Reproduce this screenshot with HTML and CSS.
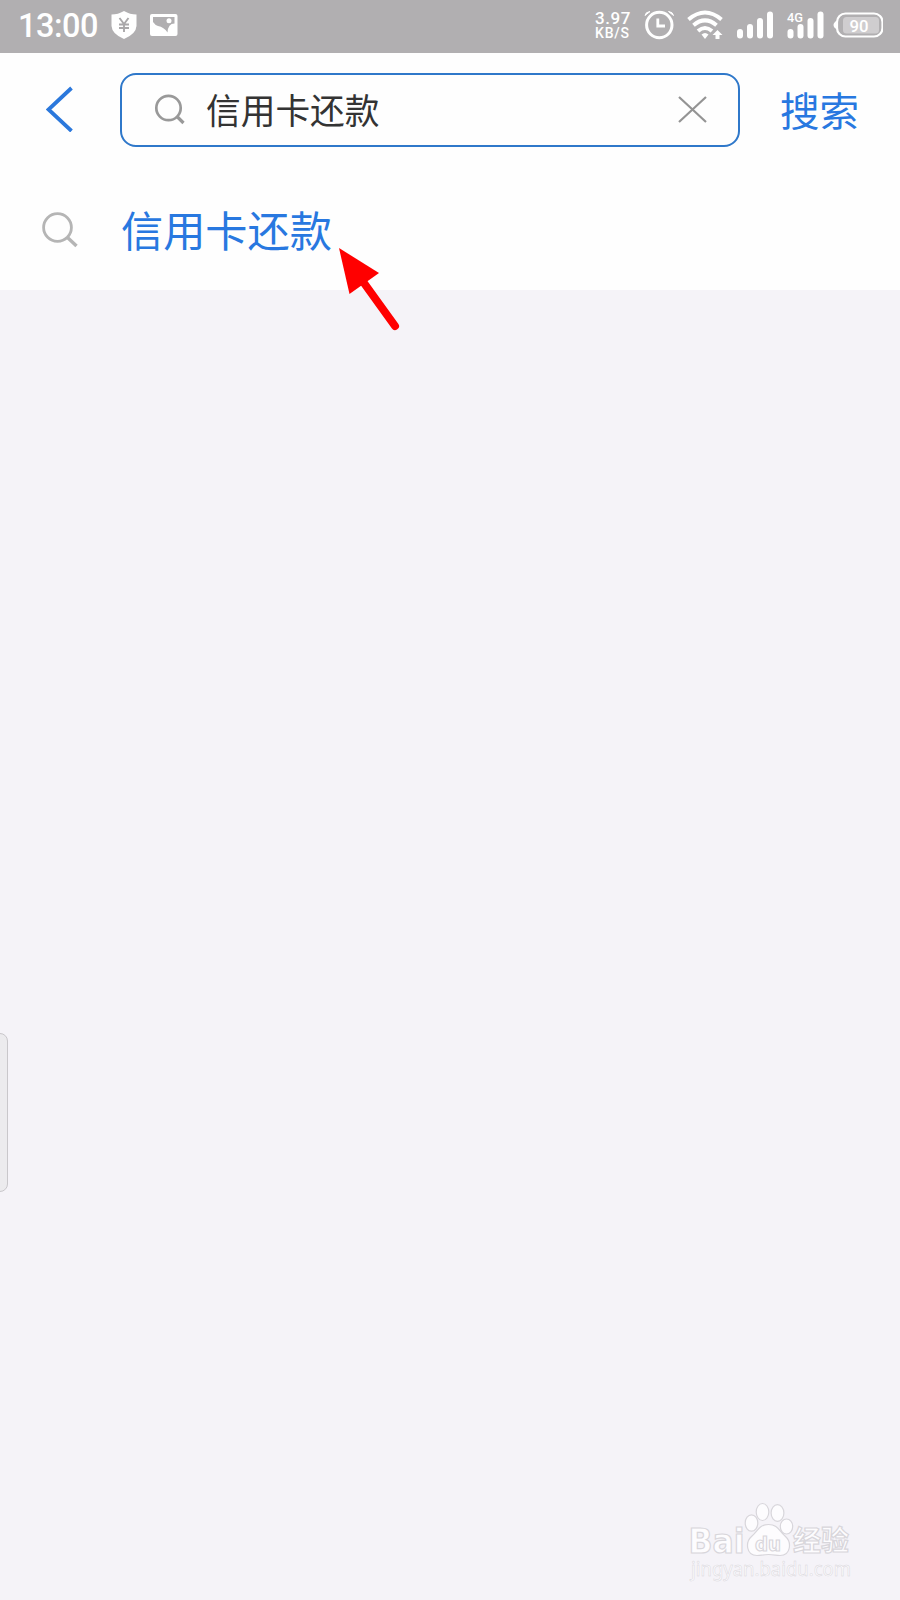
FILE: index.html
```html
<!DOCTYPE html>
<html lang="zh-CN">
<head>
<meta charset="utf-8">
<title>搜索</title>
<link rel="stylesheet" href="styles.css">
</head>
<body>
<div class="screen">
  <div class="status">
    <span class="clock">13:00</span>
    <svg class="shield" width="28" height="30" viewBox="110 10 28 30"><path d="M124 11 Q130 14.500 136.500 14.500 V26 Q136 34 124 39 Q112 34 111.500 26 V14.500 Q118 14.500 124 11Z" fill="#fff"/><path d="M119.500 18 L124 24 L128.500 18 M124 24 V32 M119 24.500 H129 M119 28 H129" fill="none" stroke="#aaa8aa" stroke-width="1.900"/></svg>
    <svg class="picture" width="28" height="24" viewBox="150 13 28 24"><rect x="150" y="14" width="27.500" height="22" rx="2" fill="#fff"/><path d="M153 17 H174.500 V23.500 Q168 23.500 167.500 32.500 Q164 27 158 26 Q155 25 153 22Z" fill="#b1afb1"/><circle cx="169" cy="20.800" r="2.500" fill="#fff"/></svg>
    <span class="speed"><span class="rate">3.97</span><span class="unit">KB/S</span></span>
    <svg class="alarm" width="30" height="30" viewBox="644 10 30 30"><circle cx="659.300" cy="25" r="12.700" fill="none" stroke="#fff" stroke-width="3"/><path d="M657.800 18.500 V26 H665" fill="none" stroke="#fff" stroke-width="2.800"/><path d="M645 15.500 Q645.500 12 650 11.500Z M668.500 11.500 Q673 12 673.500 15.500Z" fill="#fff" stroke="#fff"/></svg>
    <svg class="wifi" width="36" height="30" viewBox="687 10 36 30"><g fill="none" stroke="#fff" stroke-width="4"><path d="M688.500 19.500 Q705 5.500 721.500 19.500"/><path d="M693.500 25.300 Q705 15.500 716.500 25.300"/><path d="M698 31 Q705 25 712 31"/></g><path d="M701.500 34.500 Q705 31.500 708.500 34.500 L705 39Z" fill="#fff"/><path d="M717.500 30 L722.500 35 H719.500 V39 H715.500 V35 H712.500Z" fill="#fff"/></svg>
    <svg class="signal" width="38" height="28" viewBox="736 11 38 28"><g fill="#fff"><rect x="737" y="29" width="6" height="9.500" rx="3"/><rect x="747" y="24" width="6" height="14.500" rx="3"/><rect x="757" y="18" width="6" height="20.500" rx="3"/><rect x="767" y="11.500" width="6" height="27" rx="3"/></g></svg>
    <svg class="signal4g" width="38" height="28" viewBox="786 11 38 28"><g fill="#fff"><rect x="787.500" y="29" width="6" height="9.500" rx="3"/><rect x="797.500" y="24" width="6" height="14.500" rx="3"/><rect x="807.500" y="18" width="6" height="20.500" rx="3"/><rect x="817.500" y="11.500" width="6" height="27" rx="3"/></g><text class="net" x="787" y="21.700" textLength="16" lengthAdjust="spacingAndGlyphs">4G</text></svg>
    <svg class="battery" width="50" height="27" viewBox="833 12 50 27"><rect x="837" y="13.500" width="45.500" height="23" rx="8.500" fill="none" stroke="#fff" stroke-width="2.200"/><path d="M837 20.500 Q833.500 22.500 833.500 25 Q833.500 27.500 837 29.500Z" fill="#fff"/><rect x="843" y="17" width="36" height="16.500" rx="3.500" fill="#cfcdcf"/><text class="level" x="849.500" y="31.500" textLength="19" lengthAdjust="spacingAndGlyphs">90</text></svg>
  </div>
  <div class="header">
    <svg class="back" width="28" height="46" viewBox="46 86 28 46"><path d="M71.500 88 L48.500 109.500 L71.500 131" fill="none" stroke="#2b78dc" stroke-width="3.800"/></svg>
    <div class="field">
      <svg width="32" height="32" viewBox="154 94 32 32"><g fill="none" stroke="#999"><circle cx="168.500" cy="108" r="12.200" stroke-width="2.700"/><path d="M177 116.500 L183.500 123" stroke-width="3.200"/></g></svg>
      <span class="query">信用卡还款</span>
      <svg class="clear" width="30" height="28" viewBox="678 95 30 28"><path d="M679 97 L706 122 M706 97 L679 122" stroke="#949494" stroke-width="2.200" fill="none"/></svg>
    </div>
    <span class="submit">搜索</span>
  </div>
  <div class="suggestion">
    <svg width="38" height="38" viewBox="41 211 38 38"><g fill="none" stroke="#b5b5b5"><circle cx="57.500" cy="227.500" r="13.900" stroke-width="2.800"/><path d="M67.500 237.500 L76.500 246" stroke-width="3.400"/></g></svg>
    <span class="word">信用卡还款</span>
  </div>
  <svg class="pointer" width="64" height="86" viewBox="337 246 64 86"><path d="M339 248 L379 273 L349.500 294Z" fill="#f00"/><path d="M364 283 L395 326" stroke="#f00" stroke-width="8" stroke-linecap="round"/></svg>
  <div class="handle"></div>
  <svg class="watermark" width="170" height="84" viewBox="686 1500 170 84">
    <g fill="#fdfcfe" stroke="#d8d6db" stroke-width="1.200">
      <ellipse cx="751.500" cy="1523" rx="6.300" ry="8.200"/><ellipse cx="762.500" cy="1512" rx="6.300" ry="8.500"/><ellipse cx="777.500" cy="1513" rx="6.400" ry="8.300"/><ellipse cx="786.500" cy="1526.500" rx="6.200" ry="7.500"/>
      <path d="M768.500 1524.500 C778 1524.500 779 1531 785 1536 C792 1542 791 1555.500 780 1555.500 C776 1555.500 774 1554.500 768.500 1554.500 C763 1554.500 761 1555.500 757 1555.500 C746 1555.500 745 1542 752 1536 C758 1531 759 1524.500 768.500 1524.500Z"/>
      <text class="bai" x="688.500" y="1553" textLength="56" lengthAdjust="spacingAndGlyphs">Bai</text>
      <text class="du" x="755" y="1550.500" textLength="26" lengthAdjust="spacingAndGlyphs">du</text>
      <text class="exp" x="793" y="1551" textLength="56" lengthAdjust="spacingAndGlyphs">经验</text>
      <text class="url" x="691" y="1575.500" textLength="160" lengthAdjust="spacingAndGlyphs">jingyan.baidu.com</text>
    </g>
  </svg>
</div>
</body>
</html>
```
FILE: styles.css
```css
body { margin: 0; }
svg { display: block; flex: none; }
.screen {
  position: relative;
  width: 900px;
  height: 1600px;
  overflow: hidden;
  background: #f5f3f8;
  font-family: "Noto Sans CJK SC", sans-serif;
}
.status {
  display: flex;
  align-items: center;
  box-sizing: border-box;
  height: 53px;
  padding: 0 17px 3px 18px;
  background: #b1afb1;
  color: #fff;
  font-family: Roboto, sans-serif;
}
.clock { width: 92px; padding-top: 2px; font-size: 32.5px; font-weight: 500; line-height: 48px; letter-spacing: -0.5px; white-space: nowrap; }
.picture { margin-left: 12px; }
.speed { display: flex; flex-direction: column; width: 36px; margin-left: auto; padding-top: 1px; font-weight: 500; white-space: nowrap; }
.rate { font-size: 17px; line-height: 15px; letter-spacing: 0.6px; }
.unit { font-size: 14px; line-height: 15px; letter-spacing: 0.8px; }
.alarm { margin-left: 13px; }
.wifi { margin-left: 13px; }
.signal { margin-left: 13px; }
.signal4g { margin-left: 12px; }
.battery { margin-left: 9px; }
.net { font-size: 13px; font-weight: 500; fill: #fff; }
.level { font-size: 17px; font-weight: 500; fill: #fff; }
.header {
  display: flex;
  align-items: center;
  box-sizing: border-box;
  height: 114px;
  padding: 0 0 1px 46px;
  background: #fefefe;
}
.back { margin-bottom: 1px; }
.field {
  display: flex;
  align-items: center;
  box-sizing: border-box;
  width: 620px;
  height: 74px;
  margin-left: 46px;
  padding: 0 30px 0 32px;
  border: 2px solid #2f78ca;
  border-radius: 16px;
}
.query { margin: 0 0 2px 20px; font-size: 34.7px; line-height: 50px; color: #333; }
.clear { margin-left: auto; margin-bottom: 1px; }
.submit { margin: 0 0 2px 40px; font-size: 39.5px; line-height: 56px; color: #2878e0; }
.suggestion {
  display: flex;
  align-items: center;
  box-sizing: border-box;
  height: 123px;
  padding: 3px 0 0 41px;
  background: #fefefe;
}
.word { margin-left: 42px; margin-bottom: 2px; font-size: 42.2px; line-height: 60px; color: #2878e0; }
.pointer { position: absolute; left: 337px; top: 246px; }
.handle {
  position: absolute;
  left: -12px;
  top: 1033px;
  box-sizing: border-box;
  width: 20px;
  height: 159px;
  border: 1px solid #c9c7cb;
  border-radius: 8px;
  background: #ecebee;
}
.watermark { position: absolute; left: 686px; top: 1500px; }
.bai { font-family: "DejaVu Sans", sans-serif; font-size: 34px; font-weight: 700; }
.du { font-family: "DejaVu Sans", sans-serif; font-size: 19px; font-weight: 700; }
.exp { font-size: 28px; font-weight: 700; }
.url { font-family: "Noto Sans", sans-serif; font-size: 19px; stroke-width: 0.5px; }
```
